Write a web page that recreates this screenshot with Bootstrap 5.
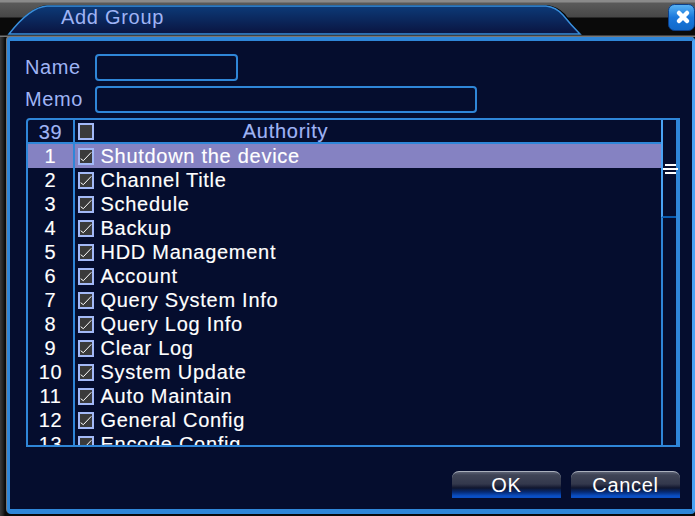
<!DOCTYPE html>
<html lang="en"><head><meta charset="utf-8"><title>Add Group</title>
<link href="https://cdn.jsdelivr.net/npm/bootstrap@5.3.0/dist/css/bootstrap.min.css" rel="stylesheet">
<style>
html,body{width:695px;height:516px;overflow:hidden;background:#0a0a0a;margin:0;font-family:"Liberation Sans",Arial,sans-serif;}
.dvr-win{width:695px;height:516px;padding-left:7px;background:linear-gradient(90deg,#3a3a3a 0,#222 3px,#0a0a0a 5px);}
.dvr-top{height:37px;position:relative;margin-left:-7px;background:linear-gradient(#8a8a8a 0,#8a8a8a 2px,#5a5a5a 3px,#474747 17px,#0a0a0a 18px,#0a0a0a 35px,#777 36px);}
.dvr-tabshape{position:absolute;left:0;top:0;width:695px;height:36px;}
.dvr-title{position:relative;padding-left:61px;padding-top:4px;color:#9fb4f5;font-size:20px;line-height:26px;letter-spacing:.7px;}
.dvr-close{position:absolute;left:668px;top:4px;width:27px;height:27px;}
.dvr-panel{height:477px;border:solid #2f86d8;border-width:4px 3px 5px 3px;border-right-color:#4aa3f5;border-radius:4px;background:#050d2e;padding:13px 15px 0 15px;box-shadow:-1px -1px 0 #777;}
.dvr-label{width:69.5px;color:#9fb4f5;font-size:20px;line-height:27px;letter-spacing:.6px;}
.dvr-field{height:27px;border:2px solid #2f86d8;border-radius:4px;background:transparent;}
.dvr-f1{width:143px}.dvr-f2{width:382px}
.dvr-gap5{margin-bottom:5px}
.dvr-list{height:329px;width:654px;margin-left:.5px;margin-top:5px;border:2px solid #2f86d8;border-radius:4px 0 0 0;overflow:hidden;position:relative;}
.dvr-row{height:24px;display:flex;color:#fff;font-size:20px;line-height:24px;letter-spacing:.72px;white-space:nowrap;-webkit-text-stroke:.15px currentColor;}
.dvr-num{width:47px;flex:none;text-align:center;border-right:2px solid #2f86d8;padding-left:1px;}
.dvr-cell{padding-left:3px;display:flex;align-items:center;gap:7px;}
.dvr-hd{color:#9fb4f5;border-bottom:2px solid #2f86d8;}
.dvr-hd .dvr-cell{flex:1;}
.dvr-auth{width:370px;text-align:center;display:block;}
.dvr-sel{background:#8582c2;}
.dvr-box{width:16px;height:17px;border:2px solid #a3b9f7;background:#3a3a3a;flex:none;display:block;}
.dvr-scroll{position:absolute;right:0;top:-2px;bottom:0;width:17px;border-left:2px solid #2f86d8;border-right:2px solid #2f86d8;background:#050d2e;}
.dvr-thumb{height:100px;border-bottom:2px solid #0a5cb0;position:relative;margin-left:-2px;border-left:2px solid #4aa3f5;}
.dvr-grip{position:absolute;left:2px;right:0;top:46px;height:10px;border-top:2px solid #fff;border-bottom:2px solid #fff;}
.dvr-grip::after{content:"";display:block;height:2px;margin:2px -2px 0;background:#fff;}
.dvr-btn{width:109px;height:27px;padding:0;border:0;border-top:1px solid #aab0bc;border-radius:7px 7px 0 0;color:#fff;font-size:20px;line-height:24px;letter-spacing:.7px;background:linear-gradient(#5c6274 0,#3f4456 3px,#33384c 12px,#10162e 16px,#062a74 20px,#0a4fc4 24px,#0a4fc4 27px);}
.dvr-btn:hover{color:#fff}
.dvr-actions{margin-top:24px;width:655px;gap:10px;}
</style></head>
<body>
<div class="dvr-win">
 <div class="dvr-top">
  <svg class="dvr-tabshape" viewBox="0 0 695 36" aria-hidden="true"><defs><linearGradient id="t" x1="0" y1="0" x2="0" y2="1"><stop offset="0" stop-color="#0c3a78"/><stop offset="1" stop-color="#0a1440"/></linearGradient></defs>
   <path d="M9 34 Q30 6 47 5 L547 5 Q557 6 565 14 Q572 24 580 34 Z" fill="#000"/>
   <path d="M9 34 Q30 7 47 6 L546 6 Q556 7 563 15 Q571 25 580 34 Z" fill="url(#t)" stroke="#3a8fdc" stroke-width="1.5"/></svg>
  <div class="dvr-title">Add Group</div>
  <svg class="dvr-close" viewBox="0 0 27 27" aria-hidden="true"><defs><linearGradient id="c" x1="0" y1="0" x2="0" y2="1"><stop offset="0" stop-color="#5ab4f4"/><stop offset=".5" stop-color="#1a78dc"/><stop offset="1" stop-color="#1268c8"/></linearGradient></defs>
   <rect x=".5" y=".5" width="26" height="26" rx="6" fill="url(#c)" stroke="#0b3f8a"/>
   <path d="M11 9 L19 17 M19 9 L11 17" stroke="#fff" stroke-width="4.5" stroke-linecap="round"/></svg>
 </div>
 <div class="dvr-panel">
  <div class="d-flex align-items-center dvr-gap5"><div class="dvr-label">Name</div><div class="dvr-field dvr-f1"></div></div>
  <div class="d-flex align-items-center"><div class="dvr-label">Memo</div><div class="dvr-field dvr-f2"></div></div>
  <div class="dvr-list">
   <div class="dvr-row dvr-hd"><div class="dvr-num">39</div><div class="dvr-cell"><span class="dvr-box"></span><span class="dvr-auth">Authority</span></div></div>
   <div class="dvr-row dvr-sel"><div class="dvr-num">1</div><div class="dvr-cell"><svg class="dvr-box" viewBox="0 0 12 13"><path d="M.7 8.7 L3.3 10.7 L11.3 2.3" stroke="#fff" fill="none"/></svg><span>Shutdown the device</span></div></div>
   <div class="dvr-row"><div class="dvr-num">2</div><div class="dvr-cell"><svg class="dvr-box" viewBox="0 0 12 13"><path d="M.7 8.7 L3.3 10.7 L11.3 2.3" stroke="#fff" fill="none"/></svg><span>Channel Title</span></div></div>
   <div class="dvr-row"><div class="dvr-num">3</div><div class="dvr-cell"><svg class="dvr-box" viewBox="0 0 12 13"><path d="M.7 8.7 L3.3 10.7 L11.3 2.3" stroke="#fff" fill="none"/></svg><span>Schedule</span></div></div>
   <div class="dvr-row"><div class="dvr-num">4</div><div class="dvr-cell"><svg class="dvr-box" viewBox="0 0 12 13"><path d="M.7 8.7 L3.3 10.7 L11.3 2.3" stroke="#fff" fill="none"/></svg><span>Backup</span></div></div>
   <div class="dvr-row"><div class="dvr-num">5</div><div class="dvr-cell"><svg class="dvr-box" viewBox="0 0 12 13"><path d="M.7 8.7 L3.3 10.7 L11.3 2.3" stroke="#fff" fill="none"/></svg><span>HDD Management</span></div></div>
   <div class="dvr-row"><div class="dvr-num">6</div><div class="dvr-cell"><svg class="dvr-box" viewBox="0 0 12 13"><path d="M.7 8.7 L3.3 10.7 L11.3 2.3" stroke="#fff" fill="none"/></svg><span>Account</span></div></div>
   <div class="dvr-row"><div class="dvr-num">7</div><div class="dvr-cell"><svg class="dvr-box" viewBox="0 0 12 13"><path d="M.7 8.7 L3.3 10.7 L11.3 2.3" stroke="#fff" fill="none"/></svg><span>Query System Info</span></div></div>
   <div class="dvr-row"><div class="dvr-num">8</div><div class="dvr-cell"><svg class="dvr-box" viewBox="0 0 12 13"><path d="M.7 8.7 L3.3 10.7 L11.3 2.3" stroke="#fff" fill="none"/></svg><span>Query Log Info</span></div></div>
   <div class="dvr-row"><div class="dvr-num">9</div><div class="dvr-cell"><svg class="dvr-box" viewBox="0 0 12 13"><path d="M.7 8.7 L3.3 10.7 L11.3 2.3" stroke="#fff" fill="none"/></svg><span>Clear Log</span></div></div>
   <div class="dvr-row"><div class="dvr-num">10</div><div class="dvr-cell"><svg class="dvr-box" viewBox="0 0 12 13"><path d="M.7 8.7 L3.3 10.7 L11.3 2.3" stroke="#fff" fill="none"/></svg><span>System Update</span></div></div>
   <div class="dvr-row"><div class="dvr-num">11</div><div class="dvr-cell"><svg class="dvr-box" viewBox="0 0 12 13"><path d="M.7 8.7 L3.3 10.7 L11.3 2.3" stroke="#fff" fill="none"/></svg><span>Auto Maintain</span></div></div>
   <div class="dvr-row"><div class="dvr-num">12</div><div class="dvr-cell"><svg class="dvr-box" viewBox="0 0 12 13"><path d="M.7 8.7 L3.3 10.7 L11.3 2.3" stroke="#fff" fill="none"/></svg><span>General Config</span></div></div>
   <div class="dvr-row"><div class="dvr-num">13</div><div class="dvr-cell"><svg class="dvr-box" viewBox="0 0 12 13"><path d="M.7 8.7 L3.3 10.7 L11.3 2.3" stroke="#fff" fill="none"/></svg><span>Encode Config</span></div></div>
   <div class="dvr-scroll"><div class="dvr-thumb"><div class="dvr-grip"></div></div></div>
  </div>
  <div class="d-flex justify-content-end dvr-actions"><button class="btn dvr-btn" type="button">OK</button><button class="btn dvr-btn" type="button">Cancel</button></div>
 </div>
</div>
</body></html>
